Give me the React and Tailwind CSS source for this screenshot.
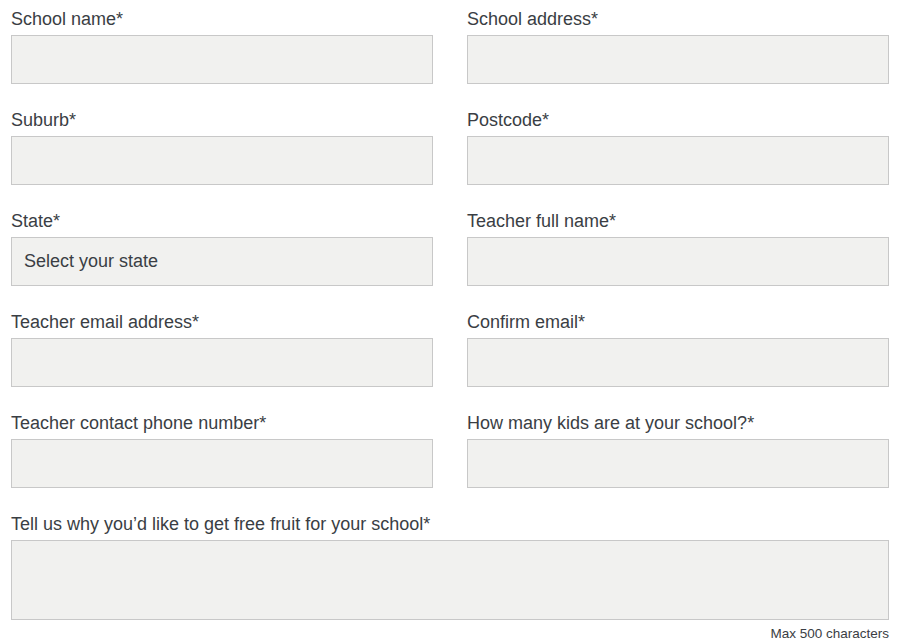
import React from "react";

const fields = [
  ["School name*", "School address*"],
  ["Suburb*", "Postcode*"],
  ["State*", "Teacher full name*"],
  ["Teacher email address*", "Confirm email*"],
  ["Teacher contact phone number*", "How many kids are at your school?*"],
];

const Field = ({ label, select }) => (
  <div className="mb-[25px]">
    <label className="block text-[18px] leading-[22px] text-[#3a3e44] mb-[5px]">
      {label}
    </label>
    {select ? (
      <div className="h-[49px] border border-[#c8c8c8] bg-[#f1f1ef] flex items-center px-[12px] text-[18px] text-[#3a3e44]">
        Select your state
      </div>
    ) : (
      <input
        type="text"
        className="block w-full h-[49px] border border-[#c8c8c8] bg-[#f1f1ef] outline-none"
      />
    )}
  </div>
);

const App = () => {
  return (
    <div
      className="bg-white min-h-screen pt-[8px] pl-[11px]"
      style={{ fontFamily: '"Liberation Sans", Arial, sans-serif' }}>
      <form className="w-[878px]">
        <div className="grid grid-cols-2 gap-x-[34px]">
          {fields.map(([a, b]) => (
            <React.Fragment key={a}>
              <Field label={a} select={a === "State*"} />
              <Field label={b} />
            </React.Fragment>
          ))}
        </div>
        <div>
          <label className="block text-[18px] leading-[22px] text-[#3a3e44] mb-[5px]">
            Tell us why you’d like to get free fruit for your school*
          </label>
          <textarea className="block w-full h-[80px] border border-[#c8c8c8] bg-[#f1f1ef] outline-none resize-none" />
          <p className="text-right text-[13.5px] leading-[16px] text-[#3a3e44] mt-[6px]">
            Max 500 characters
          </p>
        </div>
      </form>
    </div>
  );
};

export default App;
